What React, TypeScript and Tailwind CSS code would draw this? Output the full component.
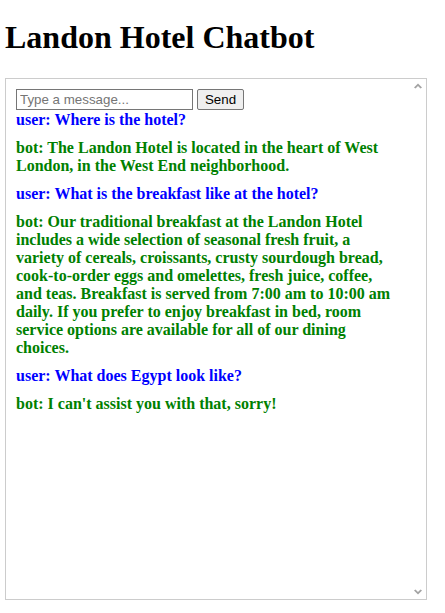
import { useState } from "react";

type Msg = { from: "user" | "bot"; text: string };

const initial: Msg[] = [
  { from: "user", text: "Where is the hotel?" },
  {
    from: "bot",
    text: "The Landon Hotel is located in the heart of West London, in the West End neighborhood.",
  },
  { from: "user", text: "What is the breakfast like at the hotel?" },
  {
    from: "bot",
    text: "Our traditional breakfast at the Landon Hotel includes a wide selection of seasonal fresh fruit, a variety of cereals, croissants, crusty sourdough bread, cook-to-order eggs and omelettes, fresh juice, coffee, and teas. Breakfast is served from 7:00 am to 10:00 am daily. If you prefer to enjoy breakfast in bed, room service options are available for all of our dining choices.",
  },
  { from: "user", text: "What does Egypt look like?" },
  { from: "bot", text: "I can't assist you with that, sorry!" },
];

export default function App() {
  const [messages, setMessages] = useState<Msg[]>(initial);
  const [input, setInput] = useState<string>("");

  const send = () => {
    if (!input.trim()) return;
    setMessages([...messages, { from: "user", text: input }]);
    setInput("");
  };

  return (
    <div className="px-[5px] font-['Liberation_Serif',serif] text-black">
      <h1 className="text-[32px] font-bold leading-[37px] mt-[19px] mb-[22px]">
        Landon Hotel Chatbot
      </h1>
      <div className="w-[422px] h-[522px] border border-[#cccccc] flex">
        <div className="flex-1 min-w-0 p-[10px] overflow-hidden">
          <div className="flex items-center gap-[4px] h-[21px]">
            <input
              className="w-[177px] h-[21px] border border-[#767676] px-[3px] text-[13.33px] font-['Liberation_Sans',Arial,sans-serif] placeholder:text-[#757575] outline-none"
              type="text"
              placeholder="Type a message..."
              value={input}
              onChange={(e) => setInput(e.target.value)}
            />
            <button
              className="w-[47px] h-[21px] border border-[#767676] bg-[#efefef] rounded-[2px] text-[13.33px] font-['Liberation_Sans',Arial,sans-serif] text-black"
              onClick={send}
            >
              Send
            </button>
          </div>
          <div className="mt-px">
            {messages.map((m, i) => (
              <div
                key={i}
                className={
                  m.from === "user"
                    ? "text-[16px] font-bold leading-[18px] mb-[10px] text-[#0000ff]"
                    : "text-[16px] font-bold leading-[18px] mb-[10px] text-[#008000]"
                }
              >
                {m.from}: {m.text}
              </div>
            ))}
          </div>
        </div>
        {/* scrollbar track, nothing to scroll */}
        <div className="w-[17px] flex flex-col justify-between items-center py-[4px] bg-white">
          <svg width="8" height="6" viewBox="0 0 8 6">
            <polygon points="0,4.5 4,0.5 8,4.5 6.5,5.5 4,3 1.5,5.5" fill="#a3a3a3" />
          </svg>
          <svg width="8" height="6" viewBox="0 0 8 6">
            <polygon points="0,1.5 4,5.5 8,1.5 6.5,0.5 4,3 1.5,0.5" fill="#a3a3a3" />
          </svg>
        </div>
      </div>
    </div>
  );
}
